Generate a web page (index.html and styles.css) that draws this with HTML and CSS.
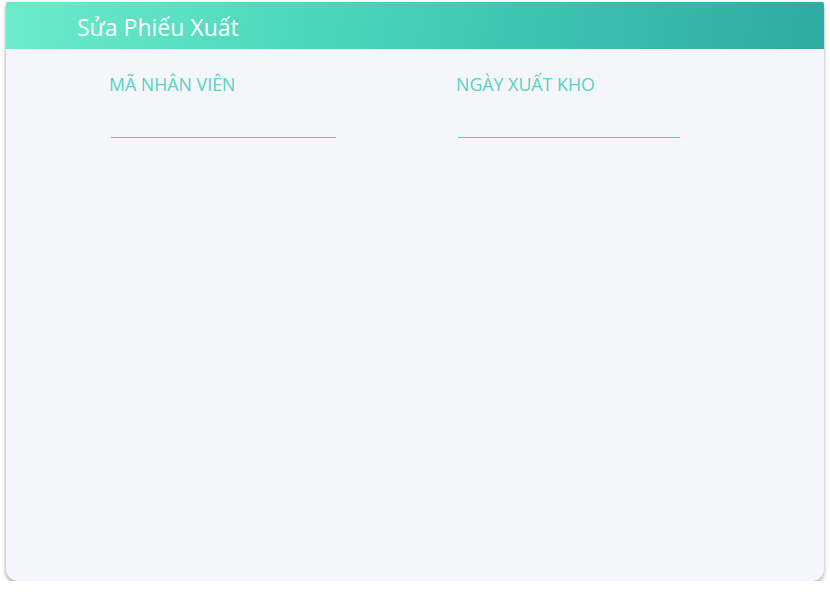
FILE: index.html
```html
<!DOCTYPE html>
<html>
<head>
<meta charset="utf-8">
<link rel="stylesheet" href="styles.css">
</head>
<body>
<div class="card">
  <div class="header">Sửa Phiếu Xuất</div>
  <div class="body">
    <div class="field f1">
      <div class="label">MÃ NHÂN VIÊN</div>
      <div class="line"></div>
    </div>
    <div class="field f2">
      <div class="label">NGÀY XUẤT KHO</div>
      <div class="line"></div>
    </div>
  </div>
</div>
</body>
</html>
```
FILE: styles.css
```css
html, body { margin: 0; padding: 0; background: #ffffff; }
body { padding: 2px 6px 0 6px; font-family: "Open Sans", sans-serif; }
.card {
  width: 818px;
  height: 579px;
  background: #f5f6fa;
  border-radius: 2px 2px 12px 12px;
  box-shadow: 0 3px 4px rgba(0,0,0,0.3), -1px 0 3px rgba(0,0,0,0.08);
  overflow: hidden;
}
.header {
  height: 47px;
  box-sizing: border-box;
  padding: 10px 0 0 71px;
  background: linear-gradient(100deg, #6becc9 0%, #4fd8bd 35%, #3cbfae 70%, #2faaa2 100%);
  color: #ffffff;
  font-size: 23px;
  line-height: 31px;
}
.body {
  display: flex;
  padding: 23px 0 0 103px;
}
.field { display: flex; flex-direction: column; }
.f1 { width: 347px; }
.label {
  color: #55d2c6;
  font-size: 17.8px;
  line-height: 25px;
}
.line {
  margin-top: 40px;
  height: 1px;
  background: #5ccfc4;
}
.f1 .line { width: 225px; margin-left: 2px; }
.f2 .line { width: 222px; margin-left: 2px; }
```
